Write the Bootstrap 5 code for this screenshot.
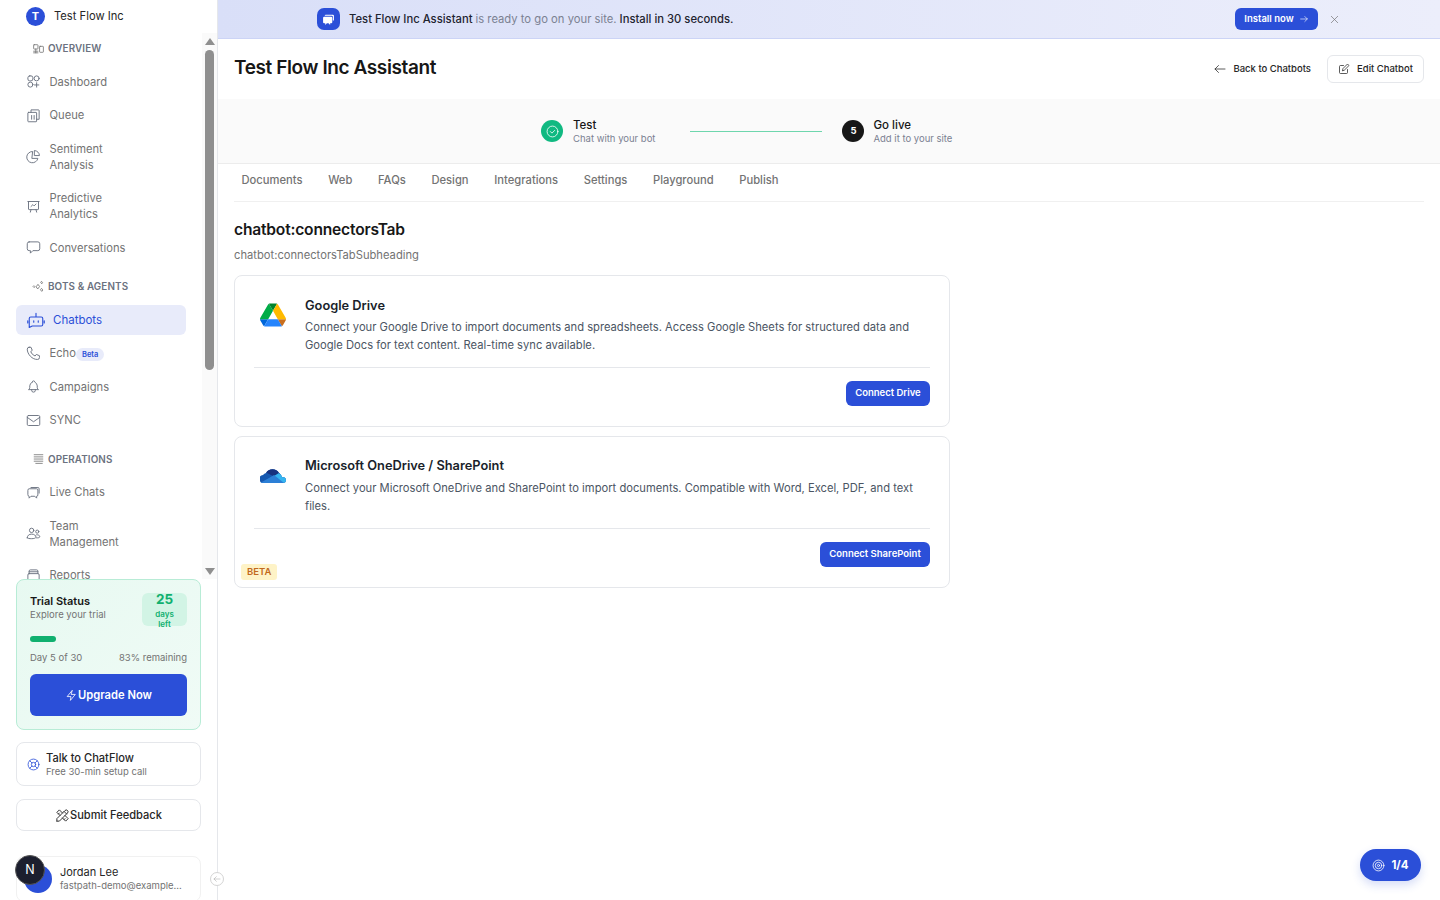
<!DOCTYPE html>
<html lang="en"><head><meta charset="utf-8"><title>Test Flow Inc Assistant</title>
<link href="https://cdn.jsdelivr.net/npm/bootstrap@5.3.0/dist/css/bootstrap.min.css" rel="stylesheet">
<style>
html,body{height:100%;overflow:hidden}
body{font-family:Inter,"Liberation Sans",sans-serif;color:#171717;background:#fff}
svg.ic{fill:none;stroke:currentColor;stroke-width:1.5;stroke-linecap:round;stroke-linejoin:round;flex:none}
.shell{height:900px;position:relative}
.side{width:218px;height:900px;border-right:1px solid #e5e7eb;flex:none}
.side>*{flex:none}
.brand{height:33px;padding:0 0 1px 26px;font-size:11.2px;font-weight:400;color:#262626;gap:9px}
.brand-dot{width:19px;height:19px;border-radius:50%;background:#2b4fd8;color:#fff;font-size:11px;font-weight:700}
.navwrap{height:546px;overflow:hidden}
.navlist{width:202px;padding:7px 16px 0;overflow:hidden}
.sec{height:16px;margin:15.500px 0 11px;padding-left:16px;font-size:9.900px;font-weight:600;color:#6b7280;letter-spacing:.1px;gap:3px;line-height:16px}
.sec:first-child{margin-top:0}
.sec svg{color:#737373}
.item{height:29.500px;padding:0 10px;margin-bottom:4px;font-size:11.2px;line-height:16px;color:#737373;gap:8.500px;border-radius:6px}
.item.dbl{height:45.500px}
.item svg{color:#6b7280}
.item.on{background:#e8ebfa;color:#2b4fd8;gap:8px;font-size:11.500px;padding-left:11px}
.item.on svg{color:#2b4fd8}
.betachip{background:#e8ebfa;color:#2b4fd8;font-size:7.5px;font-weight:600;border-radius:7px;padding:0 6px;line-height:13px;margin:2px 0 0 -8.500px}
.sbar{width:15px;background:#fafafa}
.sb-up,.sb-dn{width:0;height:0;border-left:5px solid transparent;border-right:5px solid transparent;margin:0 auto}
.sb-up{border-bottom:7px solid #8f8f8f;margin-top:5px}
.sb-dn{border-top:7px solid #8f8f8f;margin-top:auto;margin-bottom:4px}
.sb-th{width:9px;height:320px;background:#8f8f8f;border-radius:5px;margin:5px auto 0}
.foot{padding:0 16px;width:217px}
.trial{height:151px;border:1px solid #b8ecd6;border-radius:8px;background:linear-gradient(135deg,#e7f9f1,#f0fbf6);padding:13px 13px 0;margin-bottom:12px}
.tt{font-size:11px;font-weight:600;line-height:14px;margin-top:1px}
.ts{font-size:9.5px;color:#737373;line-height:13px}
.days{width:45px;height:33px;background:#d2f4e5;border-radius:6px;color:#10b06f;text-align:center;flex:none}
.days b{display:block;font-size:13.5px;line-height:14px;margin-top:-1px}
.days span{display:block;font-size:8px;font-weight:600;line-height:10px;margin-top:3px}
.pbar{height:6px;background:transparent;border-radius:3px;margin:10px 0 9px}
.pbar i{display:block;width:26px;height:6px;border-radius:3px;background:#10b06f}
.upg{height:42px;width:100%;background:#2b4fd8;border:0;border-radius:6px;color:#fff;font-size:11.2px;font-weight:600;margin-top:10px;padding:0}
.upg:hover{background:#2b4fd8;color:#fff}
.box{border:1px solid #e5e7eb;border-radius:8px;background:#fff}
.talk{height:44px;gap:6px;padding:0 10px;margin-bottom:13px}
.talk svg{color:#2b4fd8}
.tn{font-size:11.100px;font-weight:500;line-height:14px;color:#262626}
.feed{height:32px;font-size:11.100px;font-weight:500;color:#262626;margin-bottom:25px}
.user{height:46px;border-color:#f1f1f1;padding:0 0 2px 43px}
.un{font-size:11px;line-height:14px;color:#262626}
.nbadge{position:absolute;left:15px;top:855px;width:30px;height:30px;border-radius:50%;background:#1c1f2e;border:1px solid #555;color:#fff;font-size:12.500px;font-weight:400;z-index:3}
.ubub{position:absolute;left:24px;top:865px;width:28px;height:28px;border-radius:50%;background:#2b4fd8;z-index:2}
.coll{position:absolute;left:210px;top:872px;width:14px;height:14px;border-radius:50%;background:#fff;border:1px solid #d4d4d4;color:#a3a3a3;z-index:2}
.ban{height:39px;background:linear-gradient(90deg,#d9dff8,#eceefb);border-bottom:1px solid #ccd4f6;padding:0 123px 0 99px}
.ban-ic{width:23px;height:22px;background:#2b4fd8;border-radius:7px;color:#fff;margin-right:9px;flex:none}
.ban-tx{font-size:11.250px;font-weight:500;color:#1f2430;white-space:nowrap}
.ban-tx span{color:#7b8192;font-weight:400}
.inst{height:22px;width:83px;background:#2b4fd8;border:0;border-radius:6px;color:#fff;font-size:9.5px;font-weight:600;padding:0;gap:5px;margin-left:auto}
.inst:hover{background:#2b4fd8;color:#fff}
.xbtn{color:#737373;margin:0 -23px 0 11px}
.hd{height:60px;padding:0 16px}
.hd h1{font-size:19px;font-weight:600;margin:0 0 2px;line-height:26px;letter-spacing:-.4px}
.back{font-size:9.5px;font-weight:500;color:#262626;gap:7px;margin-right:16px;text-decoration:none}
.edit{width:97px;height:28px;border:1px solid #e5e7eb;border-radius:6px;background:#fff;font-size:9.5px;font-weight:500;color:#262626;padding:0;gap:7px}
.steps{height:65px;background:#fafafa;border-bottom:1px solid #ececec;padding-left:323px}
.circ{width:22px;height:22px;border-radius:50%;color:#fff;flex:none;font-size:9.5px;font-weight:700}
.stx{margin-left:10px}
.stx2{margin-left:9px}
.sn{font-size:11.5px;font-weight:500;line-height:14px;color:#171717}
.ss{font-size:9.5px;line-height:13px;color:#7b8192}
.stepline{height:1px;background:#6ed6ad;width:132px;margin:0 20px 0 35px}
.tabs{margin:0 16px;height:38px;border-bottom:1px solid #f0f0f0;gap:10.700px;padding-left:0}
.tabs .nav-link{padding:0 7.5px;font-size:11.2px;font-weight:500;color:#737373;line-height:33px}
.cnt{padding:0 16px}
.cnt h2{font-size:15.600px;font-weight:600;line-height:20px;margin:18px 0 7px;letter-spacing:-.2px}
.subh{font-size:11.2px;line-height:16px;color:#737373;margin-bottom:12px}
.conn{width:716px;height:152px;border:1px solid #e5e7eb;border-radius:8px;padding:0 19px;margin-bottom:9px;position:relative;box-shadow:none}
.conn-top{height:92px;flex:none;border-bottom:1px solid #e5e7eb;gap:19px;padding-top:26px}
.conn-top.two{padding-top:25px}
.lg{width:26px;flex:none;margin:1px 0 0 6px}
.two .lg{margin-top:5px}
.ct{font-size:12.800px;font-weight:600;line-height:16px;color:#1a1f2b;margin:-4px 0 4px}
.two .ct{margin-bottom:5px}
.cd{font-size:11.2px;line-height:18px;color:#4b5563}
.cbtn{background:#2b4fd8;border:0;border-radius:6px;color:#fff;font-size:9.5px;font-weight:600;height:25px;padding:0 9.25px;margin-top:13px}
.cbtn:hover{background:#2b4fd8;color:#fff}
.betatag{position:absolute;left:6px;top:127px;background:#fef3c7;color:#c2691c;font-size:9.5px;font-weight:600;border-radius:3px;padding:0 6px;line-height:16px}
.fab{position:absolute;left:1360px;top:849px;width:61px;height:32px;border-radius:16px;background:#2b4fd8;color:#fff;font-size:11.5px;font-weight:700;gap:6px;box-shadow:0 4px 10px rgba(43,79,216,.2);z-index:3}
.fab span{margin-top:1px}
</style></head><body>
<div class="shell d-flex">
<aside class="side d-flex flex-column">
 <div class="brand d-flex align-items-center"><span class="brand-dot d-flex align-items-center justify-content-center">T</span>Test Flow Inc</div>
 <div class="navwrap d-flex">
  <nav class="navlist">
   <div class="sec d-flex align-items-center"><svg class="ic" width="13" height="13" viewBox="0 0 24 24"><rect x="3" y="5" width="8" height="8" rx="1"/><rect x="14" y="8" width="7" height="11" rx="1"/><path d="M3 17h8M3 20h8M7 13v7"/></svg>OVERVIEW</div>
   <div class="item d-flex align-items-center"><svg class="ic" width="15" height="15" viewBox="0 0 24 24"><rect x="3" y="3" width="8" height="8" rx="3"/><circle cx="17" cy="7" r="4"/><circle cx="7" cy="17" r="4"/><path d="M17 14v7M13.5 17.500h7"/></svg>Dashboard</div>
   <div class="item d-flex align-items-center"><svg class="ic" width="15" height="15" viewBox="0 0 24 24"><rect x="3" y="7" width="14" height="15" rx="1"/><path d="M8 7V3h12a1 1 0 0 1 1 1v14h-4M9 12v6M13 12v6"/></svg>Queue</div>
   <div class="item dbl d-flex align-items-center"><svg class="ic" width="15" height="15" viewBox="0 0 24 24"><path d="M10 4a9 9 0 1 0 9 11h-9z"/><path d="M14 2.500a8 8 0 0 1 7.500 8H14z"/></svg><span>Sentiment<br>Analysis</span></div>
   <div class="item dbl d-flex align-items-center"><svg class="ic" width="15" height="15" viewBox="0 0 24 24"><path d="M3 4h18M4 4v12a1 1 0 0 0 1 1h14a1 1 0 0 0 1-1V4M8 17l-1 4M16 17l1 4M8 12l3-3 2 2 3-3"/></svg><span>Predictive<br>Analytics</span></div>
   <div class="item d-flex align-items-center"><svg class="ic" width="15" height="15" viewBox="0 0 24 24"><path d="M5 3h14a3 3 0 0 1 3 3v8a3 3 0 0 1-3 3h-8l-4 4v-4H5a3 3 0 0 1-3-3V6a3 3 0 0 1 3-3z"/></svg>Conversations</div>
   <div class="sec d-flex align-items-center"><svg class="ic" width="13" height="13" viewBox="0 0 24 24" stroke-width="2"><path d="M8 12l3-4 3 4-3 4zM18 3l1.500 2L18 7l-1.500-2zM18 16l2 2.500-2 2.500-2-2.500zM4 11l1.500 1.500L4 14l-1.500-1.500z"/></svg>BOTS &amp; AGENTS</div>
   <div class="item on d-flex align-items-center"><svg class="ic" width="18" height="18" viewBox="0 0 24 24" stroke-width="1.800"><path d="M12 8V3M5 8h14a2 2 0 0 1 2 2v8a2 2 0 0 1-2 2H7l-4 2V10a2 2 0 0 1 2-2zM1 13v3M23 13v3M9 13v2M15 13v2"/></svg>Chatbots</div>
   <div class="item d-flex align-items-center"><svg class="ic" width="15" height="15" viewBox="0 0 24 24"><path d="M5 2h3l2 5-2.500 2a12 12 0 0 0 7 7l2-2.500 5 2v3a3 3 0 0 1-3 3C10 22 2 13 2 5a3 3 0 0 1 3-3z"/></svg>Echo<span class="betachip">Beta</span></div>
   <div class="item d-flex align-items-center"><svg class="ic" width="15" height="15" viewBox="0 0 24 24"><path d="M10 5a2 2 0 0 1 4 0 7 7 0 0 1 4 6v3a4 4 0 0 0 2 3H4a4 4 0 0 0 2-3v-3a7 7 0 0 1 4-6M9 17v1a3 3 0 0 0 6 0v-1"/></svg>Campaigns</div>
   <div class="item d-flex align-items-center"><svg class="ic" width="15" height="15" viewBox="0 0 24 24"><rect x="2" y="4" width="20" height="16" rx="2"/><path d="M2 7l10 7 10-7"/></svg>SYNC</div>
   <div class="sec d-flex align-items-center"><svg class="ic" width="13" height="13" viewBox="0 0 24 24"><path d="M4 5h16M4 9h16M4 13h16M4 17h16M7 21h12"/></svg>OPERATIONS</div>
   <div class="item d-flex align-items-center"><svg class="ic" width="15" height="15" viewBox="0 0 24 24"><path d="M21 13V6a2 2 0 0 0-2-2H8M3 8a2 2 0 0 1 2-2h12a2 2 0 0 1 2 2v8a2 2 0 0 1-2 2v3l-3-3H8l-3 3v-3a2 2 0 0 1-2-2z"/></svg>Live Chats</div>
   <div class="item dbl d-flex align-items-center"><svg class="ic" width="15" height="15" viewBox="0 0 24 24"><circle cx="9" cy="7" r="3.500"/><circle cx="18" cy="9" r="2.500"/><path d="M2 19c0-4 3-6 7-6s7 2 7 5-14 3-14 1zM17 14c3 0 5 1 5 3s-3 2-5 2"/></svg><span>Team<br>Management</span></div>
   <div class="item d-flex align-items-center"><svg class="ic" width="15" height="15" viewBox="0 0 24 24"><rect x="3" y="9" width="18" height="12" rx="2"/><path d="M5 9V5a2 2 0 0 1 2-2h10a2 2 0 0 1 2 2v4M5 6h14"/></svg>Reports</div>
  </nav>
  <div class="sbar d-flex flex-column"><span class="sb-up"></span><span class="sb-th"></span><span class="sb-dn"></span></div>
 </div>
 <div class="foot">
  <div class="trial">
   <div class="d-flex justify-content-between"><div><div class="tt">Trial Status</div><div class="ts">Explore your trial</div></div><div class="days"><b>25</b><span>days<br>left</span></div></div>
   <div class="pbar"><i></i></div>
   <div class="d-flex justify-content-between ts"><span>Day 5 of 30</span><span>83% remaining</span></div>
   <button class="btn upg d-flex align-items-center justify-content-center"><svg class="ic" width="13" height="13" viewBox="0 0 24 24"><path d="M13 3L4 14h7l-1 7 9-11h-7z"/></svg>Upgrade Now</button>
  </div>
  <div class="box talk d-flex align-items-center"><svg class="ic" width="13" height="13" viewBox="0 0 24 24" stroke-width="2.200"><circle cx="12" cy="12" r="10"/><circle cx="12" cy="12" r="4"/><path d="M5 5l4 4M19 5l-4 4M5 19l4-4M19 19l-4-4"/></svg><div><div class="tn">Talk to ChatFlow</div><div class="ts">Free 30-min setup call</div></div></div>
  <div class="box feed d-flex align-items-center justify-content-center"><svg class="ic" width="15" height="15" viewBox="0 0 24 24"><path d="M3 21h4L20 8a1.500 1.500 0 0 0-4-4L3 17v4M14.500 5.500l4 4M12 8L7 3 3 7l5 5M7 8L5.500 9.500M16 12l5 5-4 4-5-5M16 17l-1.500 1.500"/></svg>Submit Feedback</div>
  <div class="box user d-flex flex-column justify-content-center"><div class="un">Jordan Lee</div><div class="ts">fastpath-demo@example...</div></div>
 </div>
</aside>
<main class="flex-grow-1">
 <div class="ban d-flex align-items-center">
  <span class="ban-ic d-flex align-items-center justify-content-center"><svg width="13" height="13" viewBox="0 0 24 24" fill="#fff"><path d="M7 3h13a2 2 0 0 1 2 2v9h-2V7a2 2 0 0 0-2-2H5a2 2 0 0 1 2-2z"/><path d="M4 7h13a2 2 0 0 1 2 2v8a2 2 0 0 1-2 2h-2v3l-3-3H9l-3 3v-3H4a2 2 0 0 1-2-2V9a2 2 0 0 1 2-2z"/></svg></span>
  <div class="ban-tx">Test Flow Inc Assistant <span>is ready to go on your site.</span> Install in 30 seconds.</div>
  <button class="btn inst d-flex align-items-center justify-content-center">Install now <svg class="ic" width="10" height="10" viewBox="0 0 24 24" stroke-width="2"><path d="M4 12h16M14 6l6 6-6 6"/></svg></button>
  <svg class="ic xbtn" width="11" height="11" viewBox="0 0 24 24" stroke-width="2"><path d="M5 5l14 14M19 5L5 19"/></svg>
 </div>
 <div class="hd d-flex align-items-center">
  <h1>Test Flow Inc Assistant</h1>
  <a class="back d-flex align-items-center ms-auto" href="#"><svg class="ic" width="12" height="12" viewBox="0 0 24 24" stroke-width="1.800"><path d="M22 12H2M9 5l-7 7 7 7"/></svg>Back to Chatbots</a>
  <button class="btn edit d-flex align-items-center justify-content-center"><svg class="ic" width="12" height="12" viewBox="0 0 24 24" stroke-width="1.800"><path d="M11 5H5a2 2 0 0 0-2 2v12a2 2 0 0 0 2 2h12a2 2 0 0 0 2-2v-6M9 15l1-4 9-9 3 3-9 9z"/></svg>Edit Chatbot</button>
 </div>
 <div class="steps d-flex align-items-center">
  <span class="circ d-flex align-items-center justify-content-center" style="background:#10b981"><svg class="ic" width="13" height="13" viewBox="0 0 24 24"><circle cx="12" cy="12" r="10"/><path d="M8 12l3 3 5-5"/></svg></span>
  <div class="stx"><div class="sn">Test</div><div class="ss">Chat with your bot</div></div>
  <span class="stepline"></span>
  <span class="circ d-flex align-items-center justify-content-center" style="background:#171717">5</span>
  <div class="stx2"><div class="sn">Go live</div><div class="ss">Add it to your site</div></div>
 </div>
 <ul class="nav tabs align-items-start">
  <li class="nav-item"><a class="nav-link" href="#">Documents</a></li>
  <li class="nav-item"><a class="nav-link" href="#">Web</a></li>
  <li class="nav-item"><a class="nav-link" href="#">FAQs</a></li>
  <li class="nav-item"><a class="nav-link" href="#">Design</a></li>
  <li class="nav-item"><a class="nav-link" href="#">Integrations</a></li>
  <li class="nav-item"><a class="nav-link" href="#">Settings</a></li>
  <li class="nav-item"><a class="nav-link" href="#">Playground</a></li>
  <li class="nav-item"><a class="nav-link" href="#">Publish</a></li>
 </ul>
 <div class="cnt">
  <h2>chatbot:connectorsTab</h2>
  <div class="subh">chatbot:connectorsTabSubheading</div>
  <div class="card conn">
   <div class="conn-top d-flex">
    <svg class="lg" height="24" viewBox="0 0 87.3 78"><path d="m6.6 66.85 3.85 6.65c.8 1.4 1.95 2.5 3.3 3.3l13.75-23.8h-27.5c0 1.55.4 3.1 1.2 4.5z" fill="#0066da"/><path d="m43.65 25-13.75-23.8c-1.35.8-2.5 1.9-3.3 3.3l-25.4 44a9.06 9.06 0 0 0 -1.2 4.5h27.5z" fill="#00ac47"/><path d="m73.55 76.8c1.35-.8 2.5-1.9 3.3-3.3l1.6-2.75 7.65-13.25c.8-1.4 1.2-2.95 1.2-4.5h-27.502l5.852 11.5z" fill="#c96f1e"/><path d="m43.65 25 13.75-23.8c-1.35-.8-2.9-1.2-4.5-1.2h-18.5c-1.6 0-3.15.45-4.5 1.2z" fill="#00832d"/><path d="m59.8 53h-32.3l-13.75 23.8c1.35.8 2.9 1.2 4.5 1.2h50.8c1.6 0 3.15-.45 4.5-1.2z" fill="#2684fc"/><path d="m73.4 26.5-12.7-22c-.8-1.4-1.95-2.5-3.3-3.3l-13.75 23.8 16.15 28h27.45c0-1.55-.4-3.1-1.2-4.5z" fill="#ffba00"/></svg>
    <div><div class="ct">Google Drive</div><div class="cd">Connect your Google Drive to import documents and spreadsheets. Access Google Sheets for structured data and Google Docs for text content. Real-time sync available.</div></div>
   </div>
   <div class="d-flex justify-content-end"><button class="btn cbtn">Connect Drive</button></div>
  </div>
  <div class="card conn">
   <div class="conn-top two d-flex">
    <svg class="lg" height="16" viewBox="0 0 26 16"><defs><clipPath id="cl"><path d="M4 16a4 4 0 0 1-1-8 7 7 0 0 1 3-2 7.500 7.500 0 0 1 13 0 5.500 5.500 0 0 1 3 4.200A3 3 0 0 1 26 13a3 3 0 0 1-3 3z"/></clipPath></defs><g clip-path="url(#cl)"><rect width="26" height="16" fill="#1558b0"/><path d="M5 5L12 0h8v7l-5 3z" fill="#17327f"/><path d="M14 9l5-3 7 5v5h-7z" fill="#35b4f0"/><path d="M0 16h24L14 8l-5 3z" fill="#2c7fd6"/></g></svg>
    <div><div class="ct">Microsoft OneDrive / SharePoint</div><div class="cd">Connect your Microsoft OneDrive and SharePoint to import documents. Compatible with Word, Excel, PDF, and text files.</div></div>
   </div>
   <div class="d-flex justify-content-end"><button class="btn cbtn">Connect SharePoint</button></div>
   <span class="betatag">BETA</span>
  </div>
 </div>
</main>
<div class="ubub"></div>
<div class="nbadge d-flex align-items-center justify-content-center">N</div>
<div class="coll d-flex align-items-center justify-content-center"><svg class="ic" width="8" height="8" viewBox="0 0 24 24" stroke-width="3"><path d="M21 12H3M10 5l-7 7 7 7"/></svg></div>
<div class="fab d-flex align-items-center justify-content-center"><svg class="ic" width="13" height="13" viewBox="0 0 24 24" stroke-width="1.800"><circle cx="12" cy="12" r="10"/><circle cx="12" cy="12" r="6"/><circle cx="12" cy="12" r="2"/></svg><span>1/4</span></div>
</div>
<script src="https://cdn.jsdelivr.net/npm/bootstrap@5.3.0/dist/js/bootstrap.bundle.min.js"></script>
</body></html>
